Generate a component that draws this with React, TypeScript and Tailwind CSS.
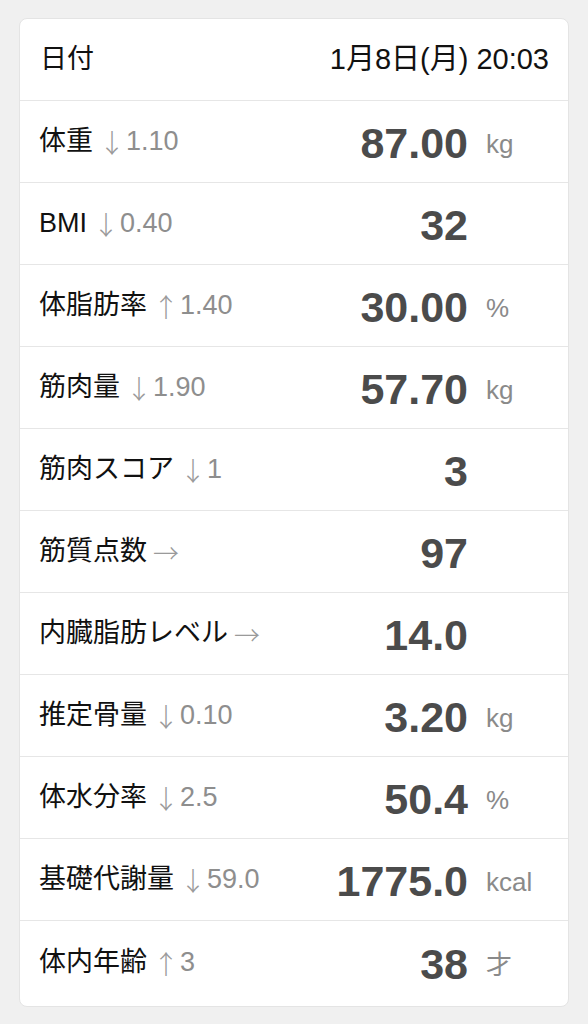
type Row = {
    label: string;
    arrow: string;
    delta?: string;
    value: string;
    unit?: string;
};

const rows: Row[] = [
    {label: '体重', arrow: '↓', delta: '1.10', value: '87.00', unit: 'kg'},
    {label: 'BMI', arrow: '↓', delta: '0.40', value: '32'},
    {label: '体脂肪率', arrow: '↑', delta: '1.40', value: '30.00', unit: '%'},
    {label: '筋肉量', arrow: '↓', delta: '1.90', value: '57.70', unit: 'kg'},
    {label: '筋肉スコア', arrow: '↓', delta: '1', value: '3'},
    {label: '筋質点数', arrow: '→', value: '97'},
    {label: '内臓脂肪レベル', arrow: '→', value: '14.0'},
    {label: '推定骨量', arrow: '↓', delta: '0.10', value: '3.20', unit: 'kg'},
    {label: '体水分率', arrow: '↓', delta: '2.5', value: '50.4', unit: '%'},
    {label: '基礎代謝量', arrow: '↓', delta: '59.0', value: '1775.0', unit: 'kcal'},
    {label: '体内年齢', arrow: '↑', delta: '3', value: '38', unit: '才'}
];

const font = {fontFamily: '"Liberation Sans", "Noto Sans CJK JP", sans-serif'};
const cjk = {fontFamily: '"Noto Sans CJK JP", sans-serif'};

export default function App() {
    return (
        <div className="min-h-[1024px] bg-[#f0f0f0] pt-[18px] pl-[19px] pr-[19px]" style={font}>
            <div className="overflow-hidden rounded-[8px] border border-[#e4e4e4] bg-white">
                <div className="flex h-[82px] items-center justify-between border-b border-[#e6e6e6] pl-[20px] pr-[19px] text-[#111]">
                    <span className="text-[27px]">日付</span>
                    <span className="text-[29px]">1月8日(月) 20:03</span>
                </div>
                {rows.map((row, i) => (
                    <div
                        key={row.label}
                        className={
                            i === rows.length - 1
                                ? 'flex h-[85px] items-center pl-[19px] pb-[3px]'
                                : 'flex h-[82px] items-center border-b border-[#e6e6e6] pl-[19px]'
                        }
                    >
                        <div className="flex flex-1 items-center whitespace-nowrap">
                            <span className="text-[27px] text-[#111]">{row.label}</span>
                            <span className="ml-[6px] text-[26px] font-light text-[#9a9a9a]" style={cjk}>
                                {row.arrow}
                            </span>
                            {row.delta ? (
                                <span className="ml-[1px] text-[27px] text-[#8e8e8e]">{row.delta}</span>
                            ) : null}
                        </div>
                        <div className="mt-[4px] text-right text-[43px] font-bold leading-none text-[#4b4b4b]">
                            {row.value}
                        </div>
                        <div className="mt-[6px] ml-[18px] w-[82px] text-[26px] text-[#8a8a8a]">{row.unit ?? ''}</div>
                    </div>
                ))}
            </div>
        </div>
    );
}
